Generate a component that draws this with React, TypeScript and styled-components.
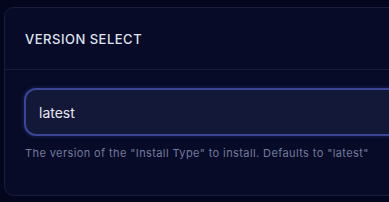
import React, { useState } from "react";
import styled, { createGlobalStyle } from "styled-components";

const GlobalStyle = createGlobalStyle`
  html, body {
    margin: 0;
    padding: 0;
    background: #03061d;
    font-family: Inter, "Noto Sans", sans-serif;
    overflow: hidden;
  }
`;

export default function App() {
  const [version, setVersion] = useState<string>("latest");

  return (
    <Page>
      <GlobalStyle />
      <Card>
        <CardHeader>
          <Title>Version Select</Title>
        </CardHeader>
        <CardBody>
          <Input value={version} onChange={(e) => setVersion(e.target.value)} />
          <Help>The version of the "Install Type" to install. Defaults to "latest"</Help>
        </CardBody>
      </Card>
    </Page>
  );
}

const Page = styled.div`
  width: 389px;
  height: 202px;
  padding: 7px 0 0 4px;
  box-sizing: border-box;
  overflow: hidden;
`;

const Card = styled.section`
  width: 420px;
  height: 189px;
  box-sizing: border-box;
  background: #070b27;
  border: 1px solid #1a1e3c;
  border-radius: 10px;
`;

const CardHeader = styled.div`
  height: 61px;
  display: flex;
  align-items: center;
  padding: 0 20px;
  border-bottom: 1px solid #1a1e3c;
`;

const Title = styled.h2`
  margin: 0;
  font-size: 13px;
  font-weight: 500;
  letter-spacing: 0.5px;
  text-transform: uppercase;
  color: #dfe2ee;
`;

const CardBody = styled.div`
  padding: 18px 0 0 19px;
  display: flex;
  flex-direction: column;
  gap: 10px;
`;

const Input = styled.input`
  width: 420px;
  height: 48px;
  box-sizing: border-box;
  background: #141838;
  border: 2px solid #3a4596;
  border-radius: 12px;
  box-shadow: 0 0 4px rgba(70, 90, 200, 0.35);
  padding: 0 13px;
  font-family: Inter, "Noto Sans", sans-serif;
  font-size: 14px;
  color: #e6e8f2;
  outline: none;
`;

const Help = styled.p`
  margin: 0 0 0 1px;
  font-size: 11px;
  letter-spacing: 0.4px;
  color: #737a9e;
`;
